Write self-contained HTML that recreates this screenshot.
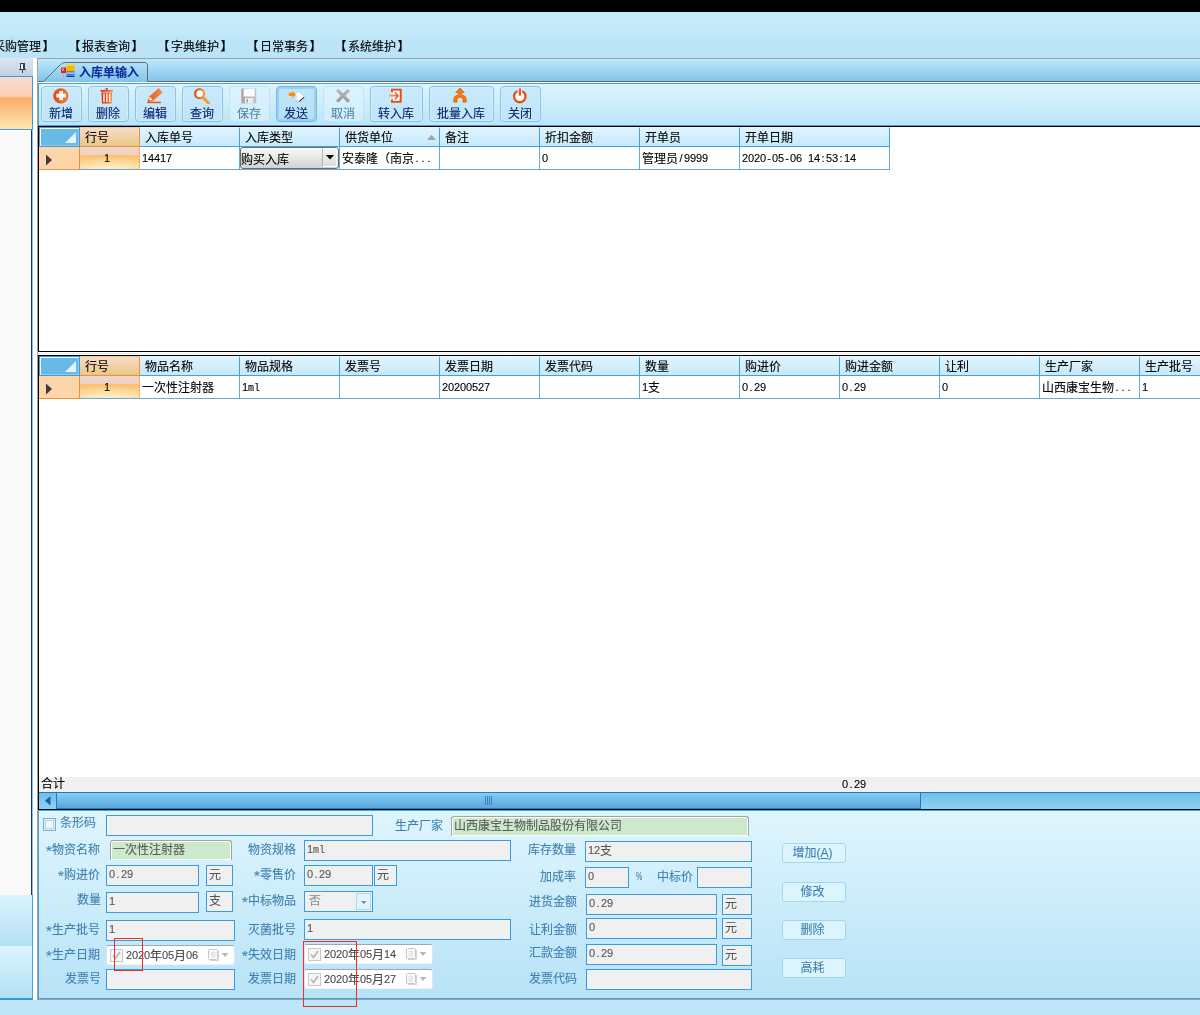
<!DOCTYPE html>
<html lang="zh-CN"><head><meta charset="utf-8"><title>入库单输入</title>
<style>
*{box-sizing:border-box;margin:0;padding:0}
html,body{width:1200px;height:1015px;overflow:hidden}
body{will-change:transform;-webkit-text-stroke:0.1px}
body{position:relative;background:#bfe6f8;font-family:"Liberation Sans","Noto Sans CJK SC","WenQuanYi Zen Hei",sans-serif;font-size:12px;line-height:12px;color:#000}
.a{position:absolute}
.t{position:absolute;white-space:nowrap;height:12px;line-height:12px}
.n{font-family:"Liberation Sans","Noto Sans CJK SC",sans-serif;font-size:11px;letter-spacing:-0.12px}
.n i{display:inline-block;width:6px;text-align:center;font-style:normal;letter-spacing:0}
.n b{display:inline-block;width:6px;text-align:center;font-weight:normal;font-family:"Liberation Mono",monospace;font-size:10px;letter-spacing:0}
.st{display:inline-block;width:6px;text-align:center;font-style:normal;font-family:"Liberation Sans",sans-serif;position:relative;top:1px;font-size:15px;line-height:12px;vertical-align:top;height:12px}
.d{font-family:"Liberation Sans","Noto Sans CJK SC",sans-serif;font-size:11px}
.menu{top:41px;color:#000}
.menu b{position:relative}
.menu b:first-child{left:-1.5px}
.menu b:last-child{left:1.5px}
.tb{position:absolute;top:86px;height:36px;border:1px solid #8cc2e6;border-radius:4px;background:linear-gradient(#c9eafb,#bfe4f8);box-shadow:inset 0 0 0 1px #d3effc}
.tb.dis{border-color:#c2e3f5;background:linear-gradient(#dcf3fd,#d2eefb);box-shadow:none}
.tb.hot{border:1px solid #78b8e4;background:linear-gradient(#bfe6f9,#b3dff6);box-shadow:inset 0 0 0 2px #9ed1f0}
.tb span{position:absolute;left:-1px;right:0;top:21px;text-align:center;color:#08226e;height:12px;line-height:12px}
.tb.dis span{color:#4a86aa}
.tb svg{position:absolute;top:1px}
.hc{position:absolute;height:20px;border-right:1px solid #4aa0dc;border-bottom:1px solid #4aa0dc;border-top:1px solid #ecf9ff;background:linear-gradient(#e0f4fe,#c6e9fa)}
.hc span{position:absolute;left:5px;top:4px;height:12px;line-height:12px;white-space:nowrap}
.ho{border-color:#e8923e;border-top-color:#f0c8a0;background:linear-gradient(#f8dcc6,#e8c888)}
.hs{border:1px solid #3c9ade;background:#69b9e7;box-shadow:inset 1px 1px 0 0 #f4fafe, inset -1px -1px 0 0 #9cc8e4}
.dc{position:absolute;height:23px;border-right:1px solid #6aa8d8;border-bottom:1px solid #6aa8d8;background:#fff}
.dc span{position:absolute;left:2px;top:6px;height:12px;line-height:12px;white-space:nowrap}
.ds{background:#fdd5ab;border-color:#e8923e}
.dn{border-right-color:#f0b070;background:radial-gradient(ellipse 45px 12px at 50% 100%,#fdf0c8 0%,rgba(253,232,176,0) 100%),linear-gradient(#f0d6ca 0,#f0d2c2 8px,#fcc070 8px,#fddc9c 22px)}
.lb{position:absolute;color:#3f7fae;white-space:nowrap;height:12px;line-height:12px;text-align:right}
.tx{position:absolute;border:1px solid #3c9ade;background:#f0f0f0;color:#555;height:21px}
.tx span{position:absolute;left:2px;top:3px;height:12px;line-height:12px;white-space:nowrap}
.gr{position:absolute;border:1px solid #a4a2a4;border-bottom:none;border-radius:3px 3px 0 0;background:#cce9cb;box-shadow:inset 0 0 0 1px #fdfefd;color:#5a5a5a;height:20px}
.gr span{position:absolute;left:2px;top:3px;height:12px;line-height:12px;white-space:nowrap}
.dp{position:absolute;border:1px solid #dfe6ec;border-top-color:#a4a6ac;border-bottom-color:#eef4f8;border-radius:3px;background:#fff;height:20px;color:#484848}
.dp .cb{position:absolute;left:3px;top:3px;width:13px;height:13px;border:1px solid #c8c8c8;background:#f6f6f6}
.dp span{position:absolute;left:19px;top:4px;height:12px;line-height:12px;white-space:nowrap}
.bt{position:absolute;left:782px;width:64px;height:20px;border:1px solid #a4d6f4;border-radius:3px;background:#dcf4fd;color:#3f7fae;text-align:center;line-height:18px;padding-right:3px}
.red{position:absolute;border:1px solid #ee2c2c}
</style></head>
<body>
<div class="a" style="left:0;top:0;width:1200px;height:12px;background:#000"></div>
<div class="a" style="left:0;top:12px;width:1200px;height:46px;background:linear-gradient(#c5ebfb 0,#c3e9fa 22px,#bde5f8 24px,#bce4f8 46px)"></div>
<div class="t menu" style="left:-19px"><b>【</b>采购管理<b>】</b></div>
<div class="t menu" style="left:70px"><b>【</b>报表查询<b>】</b></div>
<div class="t menu" style="left:159px"><b>【</b>字典维护<b>】</b></div>
<div class="t menu" style="left:248px"><b>【</b>日常事务<b>】</b></div>
<div class="t menu" style="left:336px"><b>【</b>系统维护<b>】</b></div>
<div class="a" style="left:0;top:58px;width:33px;height:18px;background:linear-gradient(#dce6f1,#c1d1e2)"></div>
<svg class="a" style="left:19px;top:63px" width="8" height="11" viewBox="0 0 8 11"><path d="M1 0h5v6H1z" fill="#e4eefa"/><path d="M1 0h5v1H1zM1 0h1v6H1zM4 0h2v6H4zM0 6h7v1H0zM3 7h1v3H3z" fill="#38424c"/></svg>
<div class="a" style="left:0;top:76px;width:33px;height:54px;border-top:1px solid #3c9ade;border-right:1px solid #3c9ade;border-bottom:1px solid #3c9ade;background:linear-gradient(#f8dccf 0,#f9d0b4 19px,#f9ad68 21px,#fbc888 36px,#fde8b2 52px)"></div>
<div class="a" style="left:0;top:130px;width:33px;height:765px;background:#fafafa;border-right:1px solid #8cc0e8;border-top:1px solid #fff"></div>
<div class="a" style="left:30px;top:130px;width:2px;height:765px;background:#0a32a0;border-left:1px solid #fff"></div>
<div class="a" style="left:0;top:895px;width:33px;height:51px;border-right:1px solid #4aa0dc;background:linear-gradient(#dbf4fe,#b3e0f5)"></div>
<div class="a" style="left:0;top:946px;width:33px;height:54px;border-right:1px solid #4aa0dc;border-bottom:2px solid #3c96d8;background:linear-gradient(#dbf4fe,#b3e0f5)"></div>
<div class="a" style="left:33px;top:58px;width:4px;height:942px;background:#fff"></div>
<div class="a" style="left:37px;top:58px;width:1163px;height:942px;border-left:1px solid #a0a0a0;border-top:1px solid #a0a0a0;border-bottom:1px solid #a0a0a0;background:#fff"></div>
<div class="a" style="left:38px;top:59px;width:1162px;height:23px;background:linear-gradient(#bce9fc,#82c2ea)"></div>
<svg class="a" style="left:38px;top:59px" width="1162" height="24" viewBox="0 0 1162 24"><path d="M0 22.500H5.500L22.500 5.500Q24.500 3.500 27.500 3.500H107.500L109.500 5.500V22.500H1162" fill="none" stroke="#686868" stroke-width="1"/></svg>
<svg class="a" style="left:61px;top:63px" width="14" height="15" viewBox="0 0 14 15"><rect x="0" y="4.500" width="5" height="5.500" fill="#d62a20"/><rect x="1" y="5" width="2" height="3" fill="#f08080"/><rect x="2" y="10" width="1" height="4" fill="#d8a0a0"/><rect x="5.500" y="1" width="8" height="8" fill="#f2b410"/><rect x="5.500" y="1" width="8" height="2" fill="#f8d048"/><rect x="5.500" y="8" width="8" height="1" fill="#a87808"/><rect x="5.500" y="9" width="8" height="5" fill="#4a7ee0"/><rect x="5.500" y="9" width="8" height="2" fill="#8ab0f4"/><rect x="5.500" y="13" width="8" height="1" fill="#1c3c98"/></svg>
<div class="t" style="left:79px;top:67px;font-weight:bold;color:#0c2ca4">入库单输入</div>
<div class="a" style="left:38px;top:82px;width:1162px;height:1px;background:#fff"></div>
<div class="a" style="left:38px;top:83px;width:1162px;height:43px;border-left:1px solid #4aa0dc;border-top:1px solid #4aa0dc;border-bottom:1px solid #4aa0dc;background:linear-gradient(#ddf4fe,#bbe5f9)"></div>
<div class="tb " style="left:41px;width:41px"><svg width="17" height="16" viewBox="0 0 17 16" style="left:11px"><defs><linearGradient id="ga" x1="0" y1="0" x2="1" y2="0"><stop offset="0" stop-color="#e8441a"/><stop offset="1" stop-color="#f27c34"/></linearGradient></defs><circle cx="7.800" cy="7.800" r="7.600" fill="url(#ga)"/><path d="M6.300 3h3.700v2.700h2.900v3.700h-2.900v2.900H6.300V9.400H3.400V5.700h2.900z" fill="#fff"/></svg><span>新增</span></div>
<div class="tb " style="left:88px;width:41px"><svg width="17" height="16" viewBox="0 0 17 16" style="left:11px"><defs><linearGradient id="gd" x1="0" y1="0" x2="1" y2="0"><stop offset="0" stop-color="#e02410"/><stop offset="1" stop-color="#f48a38"/></linearGradient></defs><path d="M5.500 0h2.400v2H5.500zM.6 2h12.300v1.800H.6z" fill="url(#gd)"/><path d="M1.500 4.400h10.500l-.4 11.100H2z" fill="url(#gd)"/><path d="M3.300 5.500h1.300v8.500H3.300zM6.200 5.500h1.300v8.500H6.200zM9.100 5.500h1.300v8.500H9.100z" fill="#fff"/></svg><span>删除</span></div>
<div class="tb " style="left:135px;width:41px"><svg width="17" height="16" viewBox="0 0 17 16" style="left:11px"><defs><linearGradient id="ge" x1="0" y1="0" x2="1" y2="0"><stop offset="0" stop-color="#ec5418"/><stop offset="1" stop-color="#f4904c"/></linearGradient></defs><path d="M11.700 0L15.600 4.600 5.800 13.300 0.300 14 2.600 8.300z" fill="url(#ge)"/><path d="M2.700 8.600L5.900 12.300 2.300 12.300z" fill="#fff"/><path d="M0.300 13.700h13.700v1.500H0.300z" fill="#ec5418"/></svg><span>编辑</span></div>
<div class="tb " style="left:182px;width:41px"><svg width="17" height="16" viewBox="0 0 17 16" style="left:11px"><defs><linearGradient id="gf" x1="0" y1="0" x2="1" y2="0"><stop offset="0" stop-color="#e84c10"/><stop offset="1" stop-color="#f49a4c"/></linearGradient></defs><path d="M9.300 9.800L14.300 14.800" stroke="#f0a038" stroke-width="3.200" stroke-linecap="round"/><circle cx="5.600" cy="5.700" r="4.500" fill="#f6fbfe" stroke="url(#gf)" stroke-width="2.200"/></svg><span>查询</span></div>
<div class="tb dis" style="left:229px;width:41px"><svg width="17" height="16" viewBox="0 0 17 16" style="left:11px"><defs><linearGradient id="gs" x1="0" y1="0" x2="1" y2="0"><stop offset="0" stop-color="#a4a4a4"/><stop offset="1" stop-color="#c4c4c4"/></linearGradient></defs><rect x=".3" y=".3" width="15" height="15.200" rx="1.500" fill="url(#gs)"/><rect x="2.600" y=".5" width="11.100" height="8" fill="#fcfcfc"/><rect x="4" y="10" width="8.300" height="5.500" fill="#ececec"/><rect x="5.500" y="11" width="1.500" height="3.500" fill="#a0a0a0"/></svg><span>保存</span></div>
<div class="tb hot" style="left:276px;width:41px"><svg width="17" height="16" viewBox="0 0 17 16" style="left:11px"><path d="M.8 4.800h3.500V3l3.700 3.500L4.300 10V8H.8z" fill="#ff8c00"/><path d="M10.500 4l5.300 4.700-4.800 4.600-3.500-2.800 2-1.500L7.500 6.500z" fill="#fff"/><path d="M15.800 8.700l-4.800 4.600.6.600 4.900-4.700z" fill="#222"/></svg><span>发送</span></div>
<div class="tb dis" style="left:323px;width:41px"><svg width="17" height="16" viewBox="0 0 17 16" style="left:11px"><defs><linearGradient id="gc" x1="0" y1="0" x2="0" y2="1"><stop offset="0" stop-color="#bcbcbc"/><stop offset="1" stop-color="#989898"/></linearGradient></defs><path d="M3.300.7L8 5.400 12.700.7 15 3 10.300 7.700 15 12.400 12.700 14.700 8 10 3.300 14.700 1 12.400 5.700 7.700 1 3z" fill="url(#gc)"/></svg><span>取消</span></div>
<div class="tb " style="left:370px;width:53px"><svg width="17" height="16" viewBox="0 0 17 16" style="left:17px"><path d="M3 .7h10.700v14H3v-3.200h2v1.200h6.500v-10H5v1.300H3z" fill="#ec4c10"/><path d="M5 2.700h6.500v10H5z" fill="#fff"/><defs><linearGradient id="gi" x1="0" y1="0" x2="1" y2="0"><stop offset="0" stop-color="#fbb070"/><stop offset="1" stop-color="#ec4c10"/></linearGradient></defs><path d="M1 6.800h7.200L6.200 4.400l1.300-1L11 7.700 7.500 12l-1.300-1 2-2.400H1z" fill="url(#gi)"/></svg><span>转入库</span></div>
<div class="tb " style="left:429px;width:65px"><svg width="17" height="16" viewBox="0 0 17 16" style="left:23px"><path d="M7 0l4.300 4.600H8.600v2.200q4.400 1.200 4.600 4v3.300h-3.200v-2.900q-.4-1.500-3-2.200-2.600.7-3 2.200v2.900H.8v-3.300q.2-2.800 4.600-4V4.600H2.700z" fill="#fa7c0c" stroke="#e25400" stroke-width=".8"/></svg><span>批量入库</span></div>
<div class="tb " style="left:500px;width:41px"><svg width="17" height="16" viewBox="0 0 17 16" style="left:11px"><circle cx="7.800" cy="8.500" r="5.800" fill="#fff"/><path d="M6.700.2h2.400v7.600H6.700z" fill="#fff" stroke="#fff" stroke-width="1.600"/><path d="M4.600 3.600A5.800 5.800 0 1 0 11 3.600" fill="none" stroke="#e84c12" stroke-width="2.300" stroke-linecap="round"/><path d="M6.700.3h2.400v7.400H6.700z" fill="#ee5c1c"/></svg><span>关闭</span></div>
<div class="a" style="left:38px;top:126px;width:1162px;height:226px;border-left:1px solid #000;border-top:1px solid #000;border-bottom:1px solid #000;background:#fff"></div>
<div class="hc hs" style="left:39px;top:127px;width:41px"></div>
<svg class="a" style="left:65px;top:132px" width="12" height="12" viewBox="0 0 12 12"><path d="M11 0v11H0z" fill="#e6f3fb"/></svg>
<div class="hc ho" style="left:80px;top:127px;width:60px"><span>行号</span></div>
<div class="hc" style="left:140px;top:127px;width:100px"><span>入库单号</span></div>
<div class="hc" style="left:240px;top:127px;width:100px"><span>入库类型</span></div>
<div class="hc" style="left:340px;top:127px;width:100px"><span>供货单位</span></div>
<div class="hc" style="left:440px;top:127px;width:100px"><span>备注</span></div>
<div class="hc" style="left:540px;top:127px;width:100px"><span>折扣金额</span></div>
<div class="hc" style="left:640px;top:127px;width:100px"><span>开单员</span></div>
<div class="hc" style="left:740px;top:127px;width:150px"><span>开单日期</span></div>
<div class="dc ds" style="left:39px;top:147px;width:41px"></div>
<svg class="a" style="left:45px;top:154px" width="8" height="12" viewBox="0 0 8 12"><path d="M1 .5l6 5.500-6 5.500z" fill="#3c3c3c"/></svg>
<div class="dc dn" style="left:80px;top:147px;width:60px"><span class="n" style="left:auto;right:29px;top:5px">1</span></div>
<div class="dc" style="left:140px;top:147px;width:100px"><span><span class="n" style="position:relative;left:0;top:-1px">14417</span></span></div>
<div class="dc" style="left:240px;top:147px;width:100px"><span></span></div>
<div class="dc" style="left:340px;top:147px;width:100px"><span>安泰隆（南京<span class="n" style="position:relative;left:0;top:-1px"><i>.</i><i>.</i><i>.</i></span></span></div>
<div class="dc" style="left:440px;top:147px;width:100px"><span></span></div>
<div class="dc" style="left:540px;top:147px;width:100px"><span><span class="n" style="position:relative;left:0;top:-1px">0</span></span></div>
<div class="dc" style="left:640px;top:147px;width:100px"><span>管理员<span class="n" style="position:relative;left:0;top:-1px"><i>/</i>9999</span></span></div>
<div class="dc" style="left:740px;top:147px;width:150px"><span><span class="n" style="position:relative;left:0;top:-1px">2020<i>-</i>05<i>-</i>06<i>&nbsp;</i>14<i>:</i>53<i>:</i>14</span></span></div>
<div class="a" style="left:240px;top:147px;width:99px;height:22px;border:1px solid #6e6e6e;border-radius:3px;background:linear-gradient(#fafafa,#d2d2d2)"></div>
<div class="t" style="left:241px;top:154px">购买入库</div>
<div class="a" style="left:322px;top:148px;width:15px;height:19px;border:1px solid #fff;border-left-color:#b8b8b8;background:linear-gradient(#f6f6f6,#dcdcdc)"></div>
<svg class="a" style="left:326px;top:155px" width="8" height="5" viewBox="0 0 8 5"><path d="M0 0h8L4 4.500z" fill="#000"/></svg>
<svg class="a" style="left:427px;top:134px" width="9" height="6" viewBox="0 0 9 6"><path d="M0 6L4.500 0.800 9 6z" fill="#a8a4a4"/></svg>
<div class="a" style="left:38px;top:352px;width:1162px;height:3px;background:linear-gradient(#fff 0,#fff 1px,#ececec 1px,#ececec 2px,#fff 2px)"></div>
<div class="a" style="left:38px;top:355px;width:1162px;height:455px;border-left:1px solid #000;border-top:1px solid #000;border-bottom:1px solid #000;background:#fff"></div>
<div class="hc hs" style="left:39px;top:356px;width:41px"></div>
<svg class="a" style="left:65px;top:361px" width="12" height="12" viewBox="0 0 12 12"><path d="M11 0v11H0z" fill="#e6f3fb"/></svg>
<div class="hc ho" style="left:80px;top:356px;width:60px"><span>行号</span></div>
<div class="hc" style="left:140px;top:356px;width:100px"><span>物品名称</span></div>
<div class="hc" style="left:240px;top:356px;width:100px"><span>物品规格</span></div>
<div class="hc" style="left:340px;top:356px;width:100px"><span>发票号</span></div>
<div class="hc" style="left:440px;top:356px;width:100px"><span>发票日期</span></div>
<div class="hc" style="left:540px;top:356px;width:100px"><span>发票代码</span></div>
<div class="hc" style="left:640px;top:356px;width:100px"><span>数量</span></div>
<div class="hc" style="left:740px;top:356px;width:100px"><span>购进价</span></div>
<div class="hc" style="left:840px;top:356px;width:100px"><span>购进金额</span></div>
<div class="hc" style="left:940px;top:356px;width:100px"><span>让利</span></div>
<div class="hc" style="left:1040px;top:356px;width:100px"><span>生产厂家</span></div>
<div class="hc" style="left:1140px;top:356px;width:100px"><span>生产批号</span></div>
<div class="dc ds" style="left:39px;top:376px;width:41px"></div>
<svg class="a" style="left:45px;top:383px" width="8" height="12" viewBox="0 0 8 12"><path d="M1 .5l6 5.500-6 5.500z" fill="#3c3c3c"/></svg>
<div class="dc dn" style="left:80px;top:376px;width:60px"><span class="n" style="left:auto;right:29px;top:5px">1</span></div>
<div class="dc" style="left:140px;top:376px;width:100px"><span>一次性注射器</span></div>
<div class="dc" style="left:240px;top:376px;width:100px"><span><span class="n" style="position:relative;left:0;top:-1px">1<b>m</b><b>l</b></span></span></div>
<div class="dc" style="left:340px;top:376px;width:100px"><span></span></div>
<div class="dc" style="left:440px;top:376px;width:100px"><span><span class="n" style="position:relative;left:0;top:-1px">20200527</span></span></div>
<div class="dc" style="left:540px;top:376px;width:100px"><span></span></div>
<div class="dc" style="left:640px;top:376px;width:100px"><span><span class="n" style="position:relative;left:0;top:-1px">1</span>支</span></div>
<div class="dc" style="left:740px;top:376px;width:100px"><span><span class="n" style="position:relative;left:0;top:-1px">0<i>.</i>29</span></span></div>
<div class="dc" style="left:840px;top:376px;width:100px"><span><span class="n" style="position:relative;left:0;top:-1px">0<i>.</i>29</span></span></div>
<div class="dc" style="left:940px;top:376px;width:100px"><span><span class="n" style="position:relative;left:0;top:-1px">0</span></span></div>
<div class="dc" style="left:1040px;top:376px;width:100px"><span>山西康宝生物<span class="n" style="position:relative;left:0;top:-1px"><i>.</i><i>.</i><i>.</i></span></span></div>
<div class="dc" style="left:1140px;top:376px;width:100px"><span><span class="n" style="position:relative;left:0;top:-1px">1</span></span></div>
<div class="a" style="left:39px;top:777px;width:1161px;height:15px;background:#f0f0f0"></div>
<div class="t" style="left:41px;top:778px">合计</div>
<div class="t n" style="left:842px;top:778px">0<i>.</i>29</div>
<div class="a" style="left:39px;top:792px;width:1161px;height:17px;border-top:1px solid #2478c0;background:linear-gradient(#70beea,#8cd2f3)"></div>
<svg class="a" style="left:45px;top:796px" width="6" height="10" viewBox="0 0 6 10"><path d="M5.500 0v9.500L0 4.700z" fill="#1c60a8"/></svg>
<div class="a" style="left:56px;top:792px;width:865px;height:17px;border:1px solid #2478c0;background:linear-gradient(#88cef2,#56a6e0)"></div>
<div class="a" style="left:485px;top:796px;width:8px;height:9px;background:repeating-linear-gradient(90deg,#3a80c0 0,#3a80c0 1px,rgba(0,0,0,0) 1px,rgba(0,0,0,0) 2px)"></div>
<div class="a" style="left:38px;top:810px;width:1162px;height:189px;border-left:1px solid #4aa0dc;border-top:1px solid #4aa0dc;border-bottom:1px solid #4aa0dc;background:linear-gradient(#dff5fe,#b7e3f7)"></div>
<div class="a" style="left:43px;top:818px;width:13px;height:13px;border:1px solid #78b0d4;background:#f0f8fc;box-shadow:inset 0 0 0 1px #dff2fb,inset 0 0 0 2px #b8d6e8"></div>
<div class="lb" style="left:60px;top:817px">条形码</div>
<div class="tx" style="left:106px;top:815px;width:267px;height:21px"></div>
<div class="lb" style="right:757px;top:820px">生产厂家</div>
<div class="gr" style="left:451px;top:816px;width:298px"><span>山西康宝生物制品股份有限公司</span></div>
<div class="lb" style="right:1100px;top:844px"><i class="st">*</i>物资名称</div>
<div class="gr" style="left:110px;top:840px;width:122px"><span>一次性注射器</span></div>
<div class="lb" style="right:904px;top:844px">物资规格</div>
<div class="tx" style="left:304px;top:840px;width:207px;height:21px"><span><span class="n" style="position:relative;left:0;top:-1px">1<b>m</b><b>l</b></span></span></div>
<div class="lb" style="right:624px;top:844px">库存数量</div>
<div class="tx" style="left:585px;top:841px;width:167px;height:21px"><span><span class="n" style="position:relative;left:0;top:-1px">12</span>支</span></div>
<div class="lb" style="right:1100px;top:869px"><i class="st">*</i>购进价</div>
<div class="tx" style="left:106px;top:865px;width:93px;height:21px"><span><span class="n" style="position:relative;left:0;top:-1px">0<i>.</i>29</span></span></div>
<div class="tx" style="left:206px;top:865px;width:27px;height:21px"><span>元</span></div>
<div class="lb" style="right:904px;top:869px"><i class="st">*</i>零售价</div>
<div class="tx" style="left:304px;top:865px;width:69px;height:21px"><span><span class="n" style="position:relative;left:0;top:-1px">0<i>.</i>29</span></span></div>
<div class="tx" style="left:374px;top:865px;width:23px;height:21px"><span>元</span></div>
<div class="lb" style="right:624px;top:871px">加成率</div>
<div class="tx" style="left:585px;top:867px;width:44px;height:21px"><span><span class="n" style="position:relative;left:0;top:-1px">0</span></span></div>
<div class="lb n" style="left:636px;top:870px;transform:scaleX(.64);transform-origin:0 0">%</div>
<div class="lb" style="right:507px;top:871px">中标价</div>
<div class="tx" style="left:697px;top:867px;width:55px;height:21px"></div>
<div class="lb" style="right:1099px;top:894px">数量</div>
<div class="tx" style="left:106px;top:892px;width:93px;height:21px"><span><span class="n" style="position:relative;left:0;top:-1px">1</span></span></div>
<div class="tx" style="left:206px;top:891px;width:27px;height:21px"><span>支</span></div>
<div class="lb" style="right:904px;top:895px"><i class="st">*</i>中标物品</div>
<div class="tx" style="left:304px;top:891px;width:69px"><span style="color:#909090;left:4px">否</span><div class="a" style="left:51px;top:1px;width:15px;height:17px;border:1px solid #a6daf7;background:#dff5fd"></div><svg class="a" style="left:56px;top:9px" width="6" height="4" viewBox="0 0 6 4"><path d="M0 0h5.500L2.750 3.300z" fill="#8a8a8a"/></svg></div>
<div class="lb" style="right:623px;top:896px">进货金额</div>
<div class="tx" style="left:586px;top:894px;width:131px;height:21px"><span><span class="n" style="position:relative;left:0;top:-1px">0<i>.</i>29</span></span></div>
<div class="tx" style="left:722px;top:894px;width:30px;height:21px"><span>元</span></div>
<div class="lb" style="right:1100px;top:924px"><i class="st">*</i>生产批号</div>
<div class="tx" style="left:106px;top:920px;width:129px;height:21px"><span><span class="n" style="position:relative;left:0;top:-1px">1</span></span></div>
<div class="lb" style="right:904px;top:924px">灭菌批号</div>
<div class="tx" style="left:304px;top:919px;width:207px;height:21px"><span><span class="n" style="position:relative;left:0;top:-1px">1</span></span></div>
<div class="lb" style="right:623px;top:924px">让利金额</div>
<div class="tx" style="left:586px;top:918px;width:131px;height:21px"><span><span class="n" style="position:relative;left:0;top:-1px">0</span></span></div>
<div class="tx" style="left:722px;top:918px;width:30px;height:21px"><span>元</span></div>
<div class="lb" style="right:1100px;top:949px"><i class="st">*</i>生产日期</div>
<div class="dp" style="left:106px;top:945px;width:129px"><div class="cb"><svg width="11" height="11" viewBox="0 0 11 11" style="position:absolute;left:0;top:0"><path d="M2 5.500l2.500 3L9 2" fill="none" stroke="#b4b4b4" stroke-width="1.600"/></svg></div><span><span class="n" style="position:relative;left:0;top:-1px">2020</span>年<span class="n" style="position:relative;left:0;top:-1px">05</span>月<span class="n" style="position:relative;left:0;top:-1px">06</span></span><svg style="position:absolute;left:101px;top:3px" width="22" height="13" viewBox="0 0 22 13"><path d="M2 11.500h8.500v-9.500" fill="none" stroke="#d4d4d4" stroke-width="1"/><rect x=".5" y=".5" width="9" height="10" rx="1" fill="#fbfbfc" stroke="#c6c6ca"/><path d="M2.500 3.500h5M2.500 5.500h5M2.500 7.500h5M4 2.500v6.500M6 2.500v6.500" stroke="#dcdce6" stroke-width=".8"/><path d="M13.500 4h7l-3.500 4z" fill="#babaac"/></svg></div>
<div class="lb" style="right:904px;top:949px"><i class="st">*</i>失效日期</div>
<div class="dp" style="left:304px;top:944px;width:129px"><div class="cb"><svg width="11" height="11" viewBox="0 0 11 11" style="position:absolute;left:0;top:0"><path d="M2 5.500l2.500 3L9 2" fill="none" stroke="#b4b4b4" stroke-width="1.600"/></svg></div><span><span class="n" style="position:relative;left:0;top:-1px">2020</span>年<span class="n" style="position:relative;left:0;top:-1px">05</span>月<span class="n" style="position:relative;left:0;top:-1px">14</span></span><svg style="position:absolute;left:101px;top:3px" width="22" height="13" viewBox="0 0 22 13"><path d="M2 11.500h8.500v-9.500" fill="none" stroke="#d4d4d4" stroke-width="1"/><rect x=".5" y=".5" width="9" height="10" rx="1" fill="#fbfbfc" stroke="#c6c6ca"/><path d="M2.500 3.500h5M2.500 5.500h5M2.500 7.500h5M4 2.500v6.500M6 2.500v6.500" stroke="#dcdce6" stroke-width=".8"/><path d="M13.500 4h7l-3.500 4z" fill="#babaac"/></svg></div>
<div class="lb" style="right:623px;top:947px">汇款金额</div>
<div class="tx" style="left:586px;top:944px;width:131px;height:21px"><span><span class="n" style="position:relative;left:0;top:-1px">0<i>.</i>29</span></span></div>
<div class="tx" style="left:722px;top:945px;width:30px;height:21px"><span>元</span></div>
<div class="lb" style="right:1099px;top:973px">发票号</div>
<div class="tx" style="left:106px;top:969px;width:129px;height:21px"></div>
<div class="lb" style="right:904px;top:973px">发票日期</div>
<div class="dp" style="left:304px;top:969px;width:129px"><div class="cb"><svg width="11" height="11" viewBox="0 0 11 11" style="position:absolute;left:0;top:0"><path d="M2 5.500l2.500 3L9 2" fill="none" stroke="#b4b4b4" stroke-width="1.600"/></svg></div><span><span class="n" style="position:relative;left:0;top:-1px">2020</span>年<span class="n" style="position:relative;left:0;top:-1px">05</span>月<span class="n" style="position:relative;left:0;top:-1px">27</span></span><svg style="position:absolute;left:101px;top:3px" width="22" height="13" viewBox="0 0 22 13"><path d="M2 11.500h8.500v-9.500" fill="none" stroke="#d4d4d4" stroke-width="1"/><rect x=".5" y=".5" width="9" height="10" rx="1" fill="#fbfbfc" stroke="#c6c6ca"/><path d="M2.500 3.500h5M2.500 5.500h5M2.500 7.500h5M4 2.500v6.500M6 2.500v6.500" stroke="#dcdce6" stroke-width=".8"/><path d="M13.500 4h7l-3.500 4z" fill="#babaac"/></svg></div>
<div class="lb" style="right:623px;top:973px">发票代码</div>
<div class="tx" style="left:586px;top:969px;width:166px;height:21px"></div>
<div class="bt" style="top:843px">增加(<u>A</u>)</div>
<div class="bt" style="top:882px">修改</div>
<div class="bt" style="top:920px">删除</div>
<div class="bt" style="top:958px">高耗</div>
<div class="red" style="left:114px;top:938px;width:29px;height:33px"></div>
<div class="red" style="left:303px;top:941px;width:54px;height:66px"></div>
</body></html>
